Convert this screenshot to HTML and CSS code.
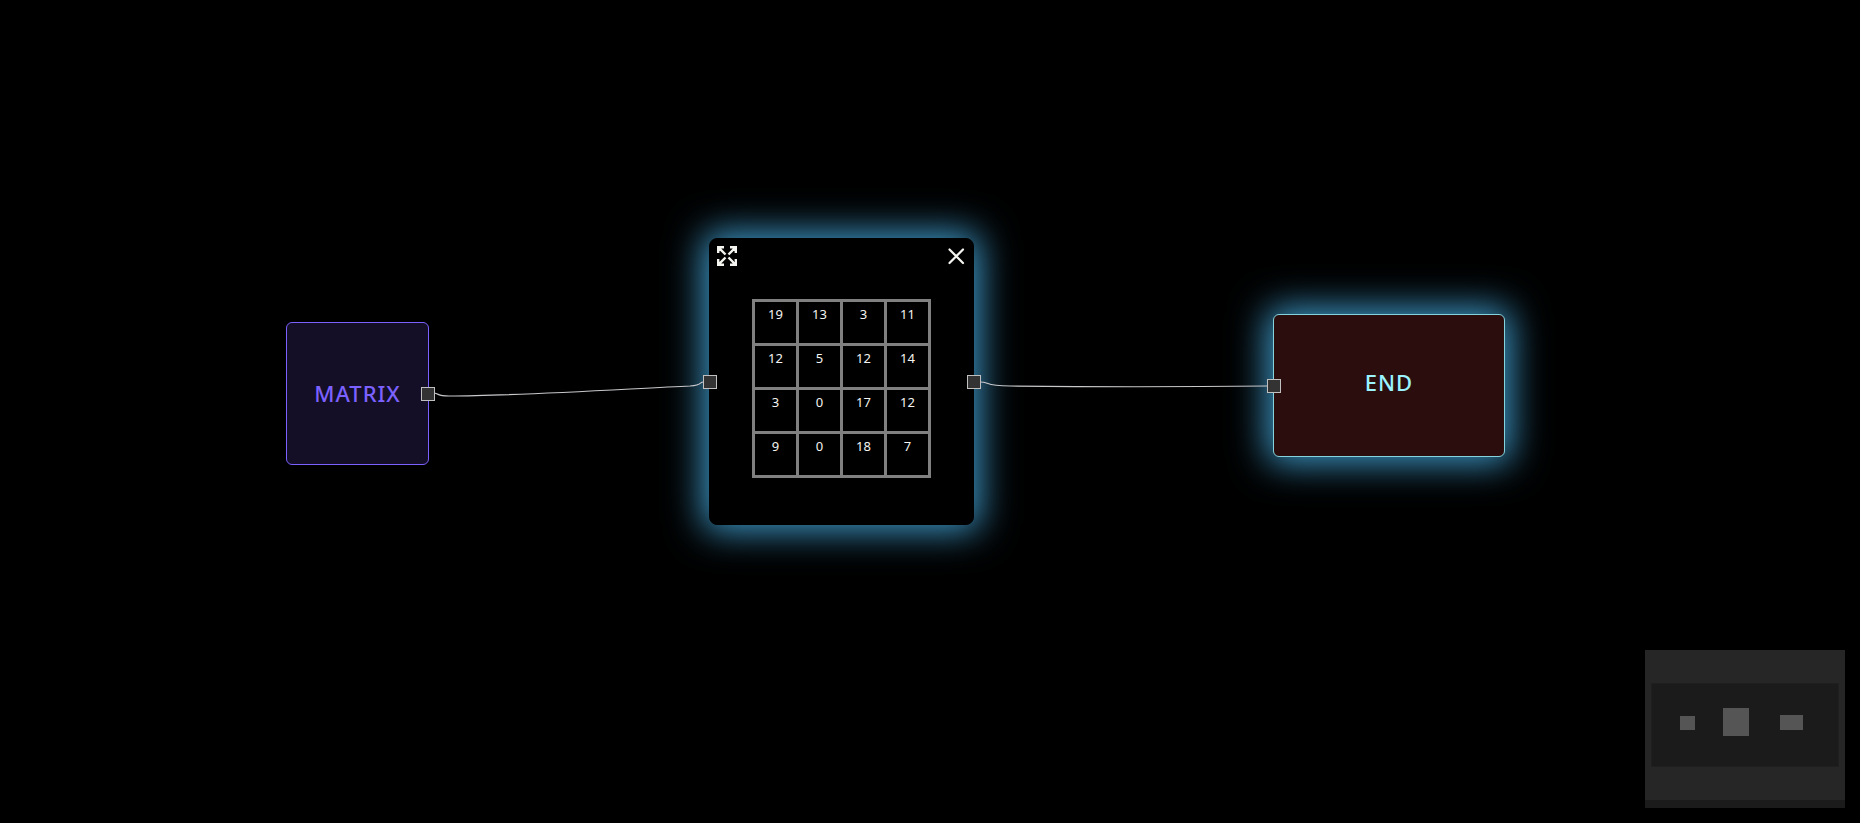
FILE: index.html
```html
<!DOCTYPE html>
<html lang="en">
<head>
<meta charset="utf-8">
<title>Matrix flow</title>
<link rel="stylesheet" href="styles.css">
</head>
<body>
<main class="canvas">
  <article class="node node-end"><h2 class="node-title">END</h2></article>
  <article class="node node-matrix"><h2 class="node-title">MATRIX</h2></article>
  <article class="node node-view">
    <header class="view-bar">
      <button class="icon-button" type="button" aria-label="Expand">
        <svg class="icon" viewBox="0 0 20 20" width="20" height="20" fill="none" stroke="currentColor" stroke-width="2.400"><path d="M1.200 7V1.200H7M1.200 1.200L8.500 8.500M13 1.200H18.800V7M18.800 1.200L11.500 8.500M1.200 13V18.800H7M1.200 18.800L8.500 11.500M18.800 13V18.800H13M18.800 18.800L11.500 11.500"/></svg>
      </button>
      <button class="icon-button" type="button" aria-label="Close">
        <svg class="icon" viewBox="0 0 20 20" width="20" height="20" fill="none" stroke="currentColor" stroke-width="2.200" stroke-linecap="round"><path d="M3.500 3.500L17 17M17 3.500L3.500 17"/></svg>
      </button>
    </header>
    <table class="matrix">
      <tbody>
        <tr><td>19</td><td>13</td><td>3</td><td>11</td></tr>
        <tr><td>12</td><td>5</td><td>12</td><td>14</td></tr>
        <tr><td>3</td><td>0</td><td>17</td><td>12</td></tr>
        <tr><td>9</td><td>0</td><td>18</td><td>7</td></tr>
      </tbody>
    </table>
  </article>
  <svg class="edges" aria-hidden="true">
    <path d="M434 393C440 394 437 396 449 396C520 396 640 388 690 386C704 385 698 382 704 382"/>
    <path d="M980 382C990 382 984 386 1010 386C1090 387 1180 387 1268 386"/>
  </svg>
  <span class="port port-matrix-out"></span>
  <span class="port port-view-in"></span>
  <span class="port port-view-out"></span>
  <span class="port port-end-in"></span>
  <aside class="minimap">
    <svg class="minimap-view" viewBox="0 0 200 150" width="200" height="150" role="img" aria-label="Minimap">
      <path class="minimap-mask" d="M0 0H200V150H0Z"/>
      <path class="minimap-window" d="M6.500 33.500H193.500V116.500H6.500Z"/>
      <path class="minimap-node" d="M35 66h15v14h-15zM78 58h26v28h-26zM135 65h23v15h-23z"/>
    </svg>
  </aside>
</main>
</body>
</html>
```

FILE: styles.css
```css
* { box-sizing: border-box; }

body {
  margin: 0;
  background: #000;
  font-family: "Noto Sans", sans-serif;
}

.canvas {
  position: relative;
  min-height: 100vh;
  overflow: hidden;
}

.node {
  position: absolute;
  display: flex;
  align-items: center;
  justify-content: center;
  border: 1px solid;
  border-radius: 6px;
}

.node-title {
  margin: 0;
  font-size: 22px;
  font-weight: 500;
  line-height: 30px;
  letter-spacing: 1px;
}

.node-matrix {
  left: 286px;
  top: 322px;
  width: 143px;
  height: 143px;
  padding-bottom: 2px;
  color: #7b61ff;
  background: #140f26;
}

.node-view {
  left: 709px;
  top: 238px;
  width: 265px;
  height: 287px;
  flex-direction: column;
  justify-content: flex-start;
  gap: 26px;
  border-color: #000;
  border-radius: 8px;
  background: #000;
  color: #f4f4f0;
  box-shadow: 0 0 36px 6px #3f9bcb;
}

.node-end {
  left: 1273px;
  top: 314px;
  width: 232px;
  height: 143px;
  padding-bottom: 8px;
  border-color: #84d3dd;
  background: #2b0d0d;
  color: #9af3ff;
  box-shadow: 0 0 36px 6px #3f9bcb;
}

.view-bar {
  display: flex;
  justify-content: space-between;
  width: 100%;
  padding: 7px;
}

.icon-button {
  padding: 0;
  border: 0;
  background: none;
  color: inherit;
  cursor: pointer;
}

.icon { display: block; }

.matrix {
  border-collapse: collapse;
  font-size: 13px;
  line-height: 18px;
}

.matrix td {
  width: 44px;
  height: 44px;
  padding: 3px 0 0;
  border: 3px solid #808080;
  text-align: center;
  vertical-align: top;
}

.edges {
  position: absolute;
  inset: 0;
  width: 100%;
  height: 100%;
  fill: none;
  stroke: #c8c8cc;
  stroke-width: 1.2;
  pointer-events: none;
}

.port {
  position: absolute;
  width: 14px;
  height: 14px;
  border: 1px solid #c0c0c0;
  background: #333;
}

.port-matrix-out { left: 421px; top: 387px; }
.port-view-in { left: 703px; top: 375px; }
.port-view-out { left: 967px; top: 375px; }
.port-end-in { left: 1267px; top: 379px; }

.minimap {
  position: absolute;
  right: 15px;
  bottom: 15px;
  padding-bottom: 8px;
  background: #1b1b1b;
}

.minimap-view { display: block; }
.minimap-mask { fill: #262626; }
.minimap-window { fill: #1b1b1b; stroke: #1f1f1f; }
.minimap-node { fill: #555; }
```
